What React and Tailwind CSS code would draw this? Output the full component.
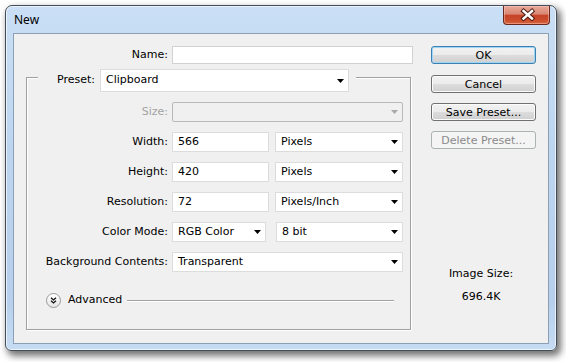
import React from "react";

const Arrow = ({ disabled }) => (
  <svg width="7" height="4" viewBox="0 0 7 4" className="shrink-0">
    <path d="M0 0H7L3.5 4Z" fill={disabled ? "#a9a9a9" : "#000"} />
  </svg>
);

const Select = ({ value, w, h = "h-[20px]", disabled }) => (
  <div
    className={`${w} ${h} flex items-center justify-between pl-[5px] pr-[4px] border ${
      disabled ? "border-[#b9b9b9] bg-[#f0f0f0] rounded-[2px]" : "border-[#dcdcdc] bg-white"
    }`}
  >
    <span className="whitespace-nowrap">{value}</span>
    <Arrow disabled={disabled} />
  </div>
);

const Field = ({ value, w }) => (
  <div className={`${w} h-[20px] flex items-center pl-[5px] border border-[#dcdcdc] bg-white`}>
    {value}
  </div>
);

const Row = ({ label, muted, children }) => (
  <div className="h-[20px] flex items-center">
    <span className={`w-[141px] text-right whitespace-nowrap ${muted ? "text-[#a3a3a3]" : ""}`}>{label}</span>
    <div className="ml-[4px] flex items-center">{children}</div>
  </div>
);

const Button = ({ children, primary, disabled, className = "" }) => {
  let look =
    "border-[#707070] bg-[linear-gradient(to_bottom,#f2f2f2_0%,#ebebeb_50%,#dddddd_50%,#cfcfcf_100%)] shadow-[inset_0_0_0_1px_#fbfbfb]";
  if (primary)
    look =
      "border-[#3c7fb1] bg-[linear-gradient(to_bottom,#f2f2f2_0%,#ebebeb_50%,#dddddd_50%,#cfcfcf_100%)] shadow-[inset_0_0_0_1px_#9fd6f5]";
  if (disabled) look = "border-[#adb2b5] bg-[#f4f4f4] text-[#8a8a8a]";
  return (
    <div
      className={`w-[105px] h-[18px] flex items-center justify-center rounded-[3px] border leading-none ${look} ${className}`}
    >
      {children}
    </div>
  );
};

export default function App() {
  return (
    <div className="w-[566px] h-[362px] bg-white pt-[5px] pl-[5px] font-['DejaVu_Sans',sans-serif] text-[11px] text-black">
      <div className="w-[552px] h-[346px] flex flex-col rounded-t-[7px] rounded-b-[6px] border border-[#434d59] bg-[linear-gradient(to_bottom,#cadff5_0%,#bdd6f0_40%,#b5cfec_85%,#c6dcf3_100%)] shadow-[inset_0_0_0_1px_rgba(255,255,255,0.65),3px_4px_7px_1px_rgba(0,0,0,0.55)]">
        {/* title bar */}
        <div className="h-[27px] shrink-0 flex items-start">
          <span className="pl-[8px] pt-[6px] leading-[16px] font-['Noto_Sans',sans-serif] text-[12px]">New</span>
          <div className="ml-auto mr-[6px] w-[47px] h-[19px] relative rounded-b-[4px] border border-t-0 border-[#6a281d] bg-[linear-gradient(to_bottom,#e9aa9b_0%,#d98571_45%,#c7442a_52%,#c94a2c_75%,#d9653b_100%)] shadow-[inset_0_0_0_1px_rgba(255,210,200,0.45)]">
            <svg width="47" height="19" viewBox="0 0 47 19" className="absolute -left-px top-0">
              <path d="M20.5 5L29 12.5M29 5L20.5 12.5" stroke="#4d1b12" strokeWidth="4.4" strokeLinecap="square" />
              <path d="M20.5 5L29 12.5M29 5L20.5 12.5" stroke="#fff" strokeWidth="2.4" strokeLinecap="square" />
            </svg>
          </div>
        </div>

        {/* client area */}
        <div className="flex-1 px-[7px] pb-[6px] flex">
          <div className="flex-1 flex bg-[#f0f0f0] border border-[#8d9fb4]">
            {/* left column */}
            <div className="w-[417px] shrink-0">
              <div className="mt-[12px] h-[18px] flex items-center">
                <span className="w-[154px] text-right">Name:</span>
                <div className="ml-[4px] w-[241px] h-[18px] border border-[#d2d2d2] bg-white" />
              </div>

              <div className="ml-[12px] mt-[13px] w-[385px] h-[253px] border border-[#a0a0a0] shadow-[1px_1px_0_#fff,inset_1px_1px_0_#fff]">
                <div className="-mt-[9px] ml-[11px] w-fit h-[23px] flex items-center bg-[#f0f0f0] pl-[19px] pr-[7px]">
                  <span className="w-[39px] whitespace-nowrap">Preset:</span>
                  <Select value="Clipboard" w="ml-[4px] w-[249px]" h="h-[23px]" />
                </div>

                <div className="mt-[10px] flex flex-col gap-[10px]">
                  <Row label="Size:" muted>
                    <Select value="" w="w-[231px]" disabled />
                  </Row>
                  <Row label="Width:">
                    <Field value="566" w="w-[97px]" />
                    <Select value="Pixels" w="ml-[6px] w-[128px]" />
                  </Row>
                  <Row label="Height:">
                    <Field value="420" w="w-[97px]" />
                    <Select value="Pixels" w="ml-[6px] w-[128px]" />
                  </Row>
                  <Row label="Resolution:">
                    <Field value="72" w="w-[97px]" />
                    <Select value="Pixels/Inch" w="ml-[6px] w-[128px]" />
                  </Row>
                  <Row label="Color Mode:">
                    <Select value="RGB Color" w="w-[94px]" />
                    <Select value="8 bit" w="ml-[10px] w-[127px]" />
                  </Row>
                  <Row label="Background Contents:">
                    <Select value="Transparent" w="w-[231px]" />
                  </Row>
                </div>

                <div className="mt-[21px] h-[15px] flex items-center pl-[19px]">
                  <div className="w-[15px] h-[15px] rounded-full border border-[#9a9a9a] bg-[linear-gradient(to_bottom,#ffffff,#e6e6e6)] flex items-center justify-center">
                    <svg width="7" height="7" viewBox="0 0 7 7">
                      <path d="M1 0.8L3.5 3L6 0.8M1 3.8L3.5 6L6 3.8" stroke="#111" strokeWidth="1.3" fill="none" />
                    </svg>
                  </div>
                  <span className="ml-[7px]">Advanced</span>
                  <div className="ml-[5px] w-[267px] h-[2px] border-t border-b border-t-[#a0a0a0] border-b-white" />
                </div>
              </div>
            </div>

            {/* right column */}
            <div className="w-[105px] shrink-0 pt-[12px]">
              <Button primary>OK</Button>
              <Button className="mt-[11px]">Cancel</Button>
              <Button className="mt-[10px]">Save Preset...</Button>
              <Button className="mt-[10px]" disabled>
                Delete Preset...
              </Button>
              <div className="mt-[118px] pr-[5px] text-center leading-[13px]">
                <div>Image Size:</div>
                <div className="mt-[10px]">696.4K</div>
              </div>
            </div>
          </div>
        </div>
      </div>
    </div>
  );
}
